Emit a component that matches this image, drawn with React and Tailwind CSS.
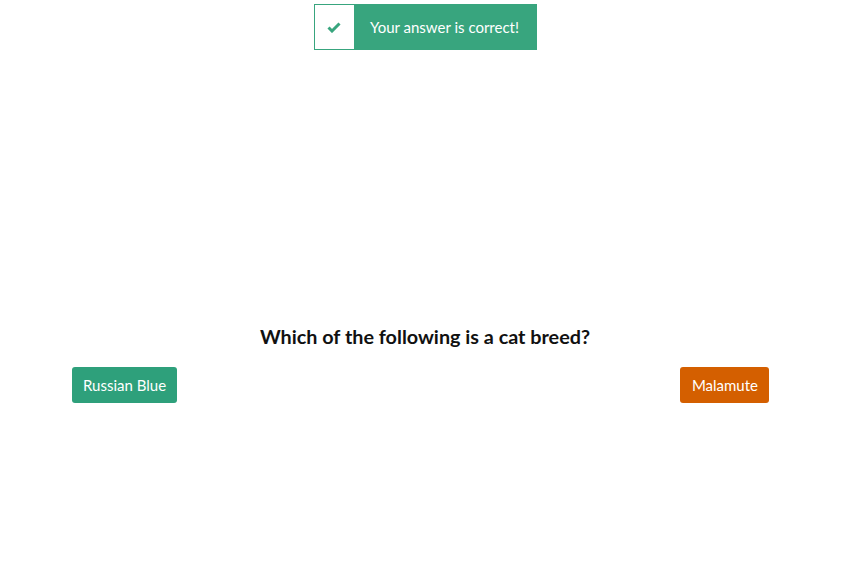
import React from "react";

const Check = () => (
  <svg width="14" height="11" viewBox="0 0 14 11" fill="none">
    <path d="M1.5 5.5 L5 9 L12.5 1.5" stroke="#38a57e" strokeWidth="3" strokeLinejoin="miter" />
  </svg>
);

export default function App() {
  return (
    <div className="w-[850px] h-[580px] bg-white font-['Lato',sans-serif] text-[#111]">
      {/* Toast */}
      <div className="flex justify-center pt-1 pl-px">
        <div className="flex h-[46px] border border-[#38a57e]">
          <div className="w-[39px] flex items-center justify-center bg-white">
            <Check />
          </div>
          <div className="bg-[#38a57e] text-white text-[15px] flex items-center pl-[16px] pr-[17px]">
            Your answer is correct!
          </div>
        </div>
      </div>

      {/* Question */}
      <div className="mt-[274px] text-center text-[19.8px] font-bold leading-[24px]">
        Which of the following is a cat breed?
      </div>

      <div className="mt-[19px] ml-[72px] w-[697px] flex justify-between">
        <button className="h-9 px-[11px] rounded-[3px] bg-[#2ea07b] text-white text-[15px]">
          Russian Blue
        </button>
        <button className="h-9 pl-[12px] pr-[11px] rounded-[3px] bg-[#d45f00] text-white text-[15px]">
          Malamute
        </button>
      </div>
    </div>
  );
}
